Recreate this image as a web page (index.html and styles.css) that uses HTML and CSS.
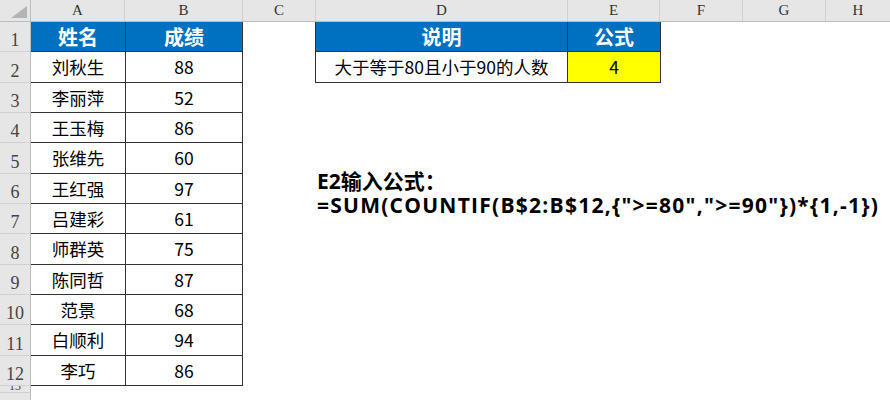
FILE: index.html
```html
<!DOCTYPE html>
<html lang="zh-CN">
<head>
    <meta charset="UTF-8">
    <title>COUNTIF</title>
    <link rel="stylesheet" href="styles.css">
</head>
<body>
<div class="sheet">
    <div class="colhead">
        <div class="corner">
            <svg width="16" height="12" viewBox="0 0 16 12"><polygon points="16,0 16,12 0,12" fill="#b4b4b4"/></svg>
        </div>
        <div class="col w-a">A</div>
        <div class="col w-b">B</div>
        <div class="col w-c">C</div>
        <div class="col w-d">D</div>
        <div class="col w-e">E</div>
        <div class="col w-f">F</div>
        <div class="col w-g">G</div>
        <div class="col w-h">H</div>
    </div>
    <div class="body">
        <div class="rowhead">
            <div class="rn">1</div>
            <div class="rn">2</div>
            <div class="rn">3</div>
            <div class="rn">4</div>
            <div class="rn">5</div>
            <div class="rn">6</div>
            <div class="rn">7</div>
            <div class="rn">8</div>
            <div class="rn">9</div>
            <div class="rn">10</div>
            <div class="rn">11</div>
            <div class="rn">12</div>
            <div class="rn short">13</div>
            <div class="rn">14</div>
        </div>
        <div class="cells">
            <div class="scores">
                <div class="hd">姓名</div><div class="hd">成绩</div>
                <div>刘秋生</div><div>88</div>
                <div>李丽萍</div><div>52</div>
                <div>王玉梅</div><div>86</div>
                <div>张维先</div><div>60</div>
                <div>王红强</div><div>97</div>
                <div>吕建彩</div><div>61</div>
                <div>师群英</div><div>75</div>
                <div>陈同哲</div><div>87</div>
                <div>范景</div><div>68</div>
                <div>白顺利</div><div>94</div>
                <div>李巧</div><div>86</div>
            </div>
            <div class="info">
                <div class="hd">说明</div><div class="hd">公式</div>
                <div>大于等于80且小于90的人数</div><div class="result">4</div>
            </div>
            <div class="note">
                <p>E2输入公式：</p>
                <p class="formula">=SUM(COUNTIF(B$2:B$12,{"&gt;=80","&gt;=90"})*{1,-1})</p>
            </div>
        </div>
    </div>
</div>
</body>
</html>
```

FILE: styles.css
```css
@charset "UTF-8";
/* reset */
body,p,div{margin:0;padding:0}
body{font-family:"Noto Sans CJK SC", sans-serif;color:#000;background:#fff;}

.sheet{
    width:890px;
    height:400px;
    overflow:hidden;
}

/* column letters */
.colhead{
    display:flex;
    height:22px;
    background:#e6e6e6;
    border-bottom:1px solid #bdbdbd;
    box-sizing:border-box;
}
.corner{
    width:31px;
    flex:none;
    border-right:1px solid #bdbdbd;
    box-sizing:border-box;
    display:flex;
    align-items:flex-end;
    justify-content:flex-end;
    padding:0 3px 3px 0;
}
.col{
    flex:none;
    border-right:1px solid #d0d0d0;
    box-sizing:border-box;
    text-align:center;
    font:15px/21px "Liberation Serif", serif;
    color:#333;
}
.w-a{width:94px}
.w-b{width:118px}
.w-c{width:73px}
.w-d{width:252px}
.w-e{width:92px}
.w-f{width:83px}
.w-g{width:83px}
.w-h{flex:1;border-right:0}

.body{
    display:flex;
    height:378px;
}

/* row numbers */
.rowhead{
    width:31px;
    flex:none;
    background:#e6e6e6;
    border-right:1px solid #bdbdbd;
    box-sizing:border-box;
}
.rn{
    height:30.33px;
    border-bottom:1px solid #d0d0d0;
    box-sizing:border-box;
    display:flex;
    align-items:flex-end;
    justify-content:center;
    padding-bottom:2px;
    font:18px/1 "Liberation Serif", serif;
    color:#444;
    overflow:hidden;
}
.rn.short{
    height:7px;
    padding-bottom:0;
    font-size:12px;
}

.cells{
    flex:1;
    display:flex;
    align-items:flex-start;
    position:relative;
}

/* bordered tables */
.scores,.info{
    display:grid;
    gap:1px;
    background:#333;
    border-right:1px solid #333;
    border-bottom:1px solid #333;
}
.scores{
    grid-template-columns:94px 116px;
    grid-template-rows:repeat(12, 29.33px);
}
.info{
    margin-left:72px;
    border-left:1px solid #333;
    grid-template-columns:251px 92px;
    grid-template-rows:repeat(2, 29.33px);
}
.scores div,.info div{
    background:#fff;
    display:flex;
    align-items:center;
    justify-content:center;
    font-size:17.5px;
}
.scores .hd,.info .hd{
    background:#0070c0;
    color:#fff;
    font-weight:bold;
    font-size:20px;
}
.info .result{
    background:#ffff00;
}

/* formula note floating on the sheet */
.note{
    position:absolute;
    left:286px;
    top:147px;
    font:bold 21px/24px "Open Sans", "Noto Sans CJK SC", sans-serif;
    color:#000;
    white-space:nowrap;
}
.formula{
    letter-spacing:1.25px;
}
```
